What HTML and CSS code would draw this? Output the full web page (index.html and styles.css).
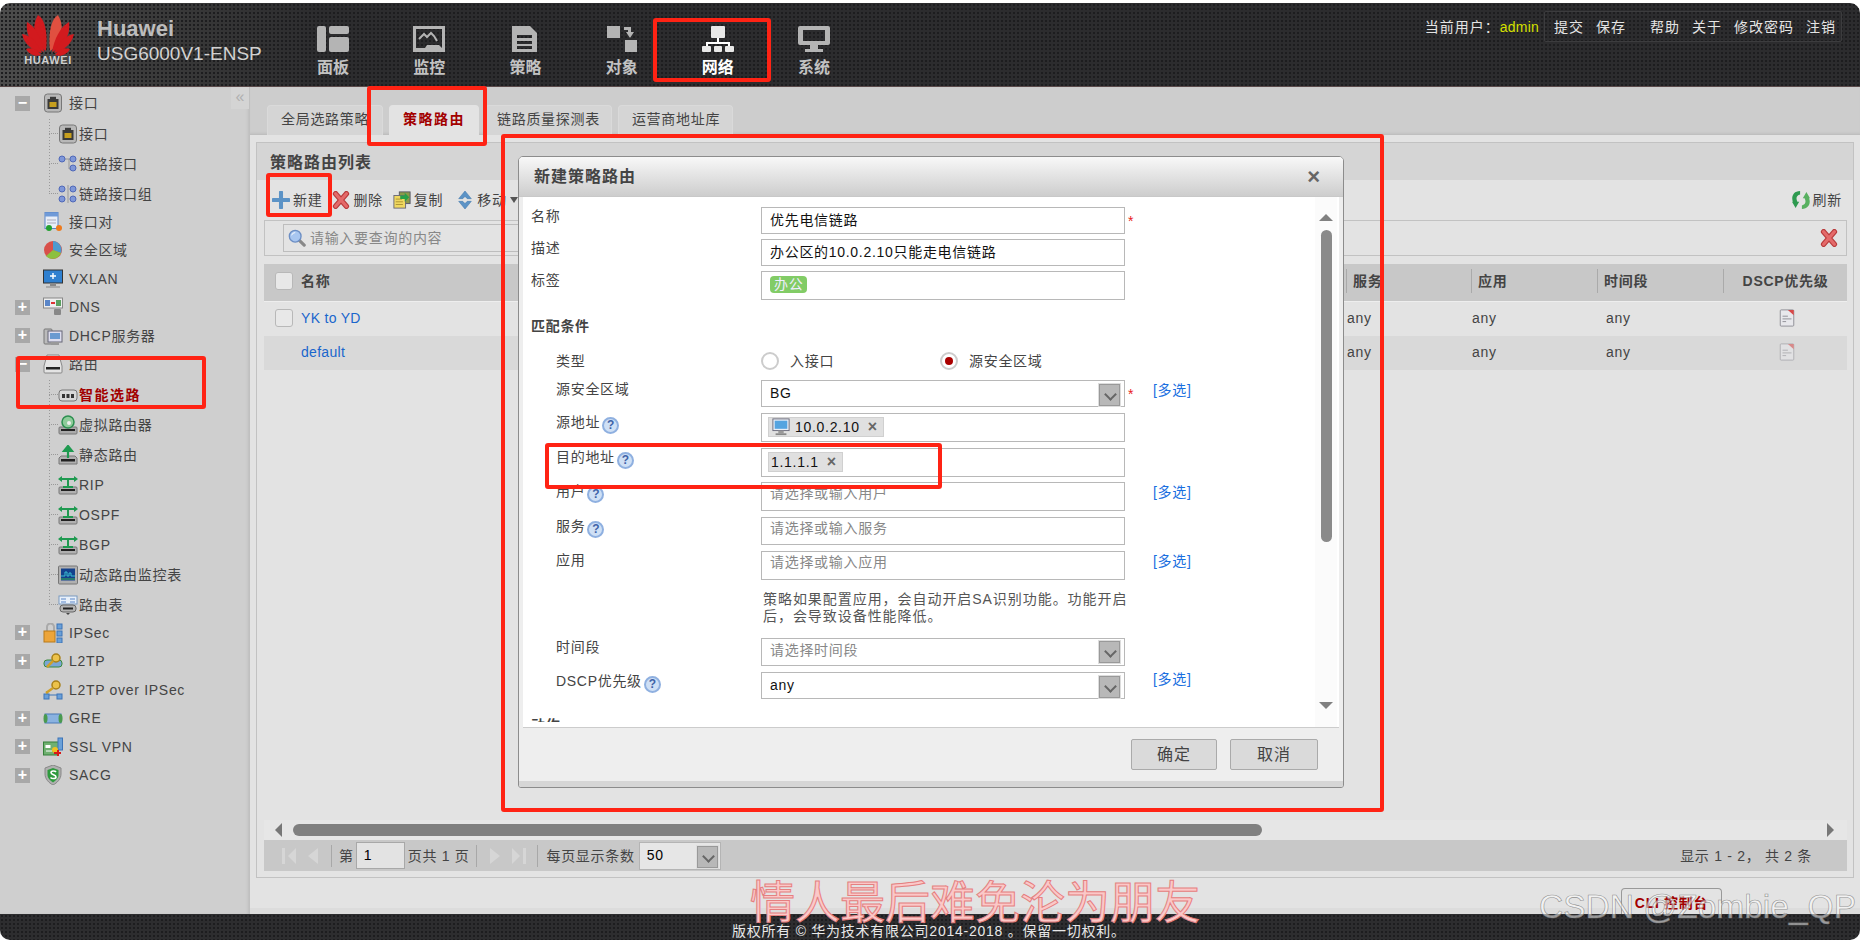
FILE: index.html
```html
<!DOCTYPE html>
<html lang="zh-CN">
<head>
<meta charset="utf-8">
<title>USG6000V1-ENSP</title>
<link rel="stylesheet" href="styles.css">
</head>
<body>
<svg class="defs" aria-hidden="true">
  <symbol id="i-port" viewBox="0 0 20 20"><rect x="1.5" y="1" width="17" height="18" rx="3" fill="#b8b8b8" stroke="#777"/><rect x="4.5" y="6" width="11" height="10" fill="#3a3a3a"/><rect x="7" y="3.8" width="6" height="3" fill="#3a3a3a"/><rect x="6.5" y="9" width="7" height="5" fill="#c79f1e"/></symbol>
  <symbol id="i-link" viewBox="0 0 20 20"><path d="M11 5v10h5M4 5h12" stroke="#999" fill="none"/><circle cx="4" cy="5" r="3" fill="#7f97d8" stroke="#4f68b8"/><circle cx="15" cy="5" r="3" fill="#7f97d8" stroke="#4f68b8"/><circle cx="15" cy="14" r="3" fill="#7f97d8" stroke="#4f68b8"/></symbol>
  <symbol id="i-linkg" viewBox="0 0 20 20"><path d="M10 1v18" stroke="#999"/><circle cx="4" cy="5" r="3" fill="#7f97d8" stroke="#4f68b8"/><circle cx="15" cy="5" r="3" fill="#7f97d8" stroke="#4f68b8"/><circle cx="4" cy="15" r="3" fill="#7f97d8" stroke="#4f68b8"/><circle cx="15" cy="15" r="3" fill="#7f97d8" stroke="#4f68b8"/></symbol>
  <symbol id="i-pair" viewBox="0 0 20 20"><rect x="2" y="0.5" width="13" height="16" fill="#e8eef8" stroke="#5a86c8"/><rect x="2" y="0.5" width="13" height="4" fill="#6f9ad8"/><path d="M4 8h9M4 11h9" stroke="#aab"/><circle cx="6" cy="16" r="3" fill="#22a030"/><circle cx="16" cy="16" r="3" fill="#ee7a1c"/></symbol>
  <symbol id="i-zone" viewBox="0 0 20 20"><circle cx="10" cy="10" r="9" fill="#d8504a"/><path d="M10 10V1a9 9 0 0 1 8 12z" fill="#4c9ad0"/><path d="M10 10l8 3a9 9 0 0 1-15 3z" fill="#8cc040"/></symbol>
  <symbol id="i-vx" viewBox="0 0 20 20"><rect x="0.5" y="1" width="19" height="13" fill="#2f80d0" stroke="#333"/><path d="M10 4v6M7 7h6" stroke="#fff" stroke-width="1.4"/><rect x="7" y="14" width="6" height="3" fill="#888"/><rect x="3" y="17" width="14" height="2" fill="#aaa"/></symbol>
  <symbol id="i-dns" viewBox="0 0 20 20"><rect x="0.5" y="1" width="19" height="10" fill="#eee" stroke="#888"/><rect x="2" y="3" width="5" height="6" fill="#5a86c8"/><rect x="13" y="3" width="5" height="6" fill="#5aa060"/><path d="M8 6h4" stroke="#d33" stroke-width="2"/><rect x="11" y="12" width="7" height="6" rx="1" fill="#888"/></symbol>
  <symbol id="i-dhcp" viewBox="0 0 20 20"><rect x="1" y="3" width="8" height="15" rx="1" fill="#bbb" stroke="#777"/><rect x="5" y="5" width="14" height="11" fill="#dde" stroke="#667"/><rect x="7" y="7" width="10" height="6" fill="#6a9ad0"/><rect x="8" y="16" width="8" height="3" fill="#999"/></symbol>
  <symbol id="i-route" viewBox="0 0 20 20"><path d="M4 1h12l3 11v6a1 1 0 0 1-1 1H2a1 1 0 0 1-1-1v-6z" fill="#e4e4e4" stroke="#888"/><rect x="3" y="13" width="14" height="2.5" fill="#222"/></symbol>
  <symbol id="i-smart" viewBox="0 0 20 20"><rect x="1" y="5" width="18" height="11" rx="3" fill="#d8d8d8" stroke="#777"/><rect x="4" y="9" width="3" height="4" fill="#333"/><rect x="8.500" y="9" width="3" height="4" fill="#333"/><rect x="13" y="9" width="3" height="4" fill="#333"/></symbol>
  <symbol id="i-vr" viewBox="0 0 20 20"><rect x="1" y="12" width="18" height="7" rx="1" fill="#aaa" stroke="#777"/><rect x="3" y="14" width="14" height="2" fill="#222"/><circle cx="10" cy="7" r="6" fill="#8ecc9a" stroke="#2c8f50" stroke-width="1.5"/><circle cx="11" cy="8" r="2" fill="#eee"/></symbol>
  <symbol id="i-static" viewBox="0 0 20 20"><path d="M3 11h14l2 2v6H1v-6z" fill="#b0b0b0" stroke="#777"/><rect x="3" y="14" width="14" height="2.5" fill="#222"/><path d="M10 13V3M6 6l4-5 4 5z" stroke="#1f9a50" stroke-width="2.2" fill="#1f9a50"/></symbol>
  <symbol id="i-tree" viewBox="0 0 20 20"><rect x="1" y="12" width="18" height="7" rx="1" fill="#b0b0b0" stroke="#777"/><rect x="3" y="14" width="14" height="2" fill="#222"/><path d="M10 13V5M2 4h16M5 12h10" stroke="#1f9a50" stroke-width="2" fill="none"/><path d="M0 4l4-3v6zM20 4l-4-3v6z" fill="#1f9a50"/></symbol>
  <symbol id="i-mon" viewBox="0 0 20 20"><rect x="0.5" y="1" width="19" height="18" rx="1" fill="#b0b0b0" stroke="#777"/><rect x="3" y="3.5" width="14" height="12" fill="#14418c"/><path d="M3 11h4V7h2v4h2V8h2v3h4" stroke="#38c0d0" fill="none"/><path d="M3 14h14" stroke="#3ab050"/></symbol>
  <symbol id="i-rt" viewBox="0 0 20 20"><rect x="1" y="1" width="18" height="8" fill="#e8f0fa" stroke="#7a9ac0"/><path d="M3 4h5M12 4h5M3 7h5M12 7h5" stroke="#5a86c8"/><rect x="2" y="10" width="16" height="7" rx="3" fill="#b4b4b4" stroke="#666"/><rect x="5" y="12.5" width="10" height="2" fill="#222"/><path d="M10 20l-2-2h4z" fill="#444"/></symbol>
  <symbol id="i-ipsec" viewBox="0 0 20 20"><path d="M4 8V4a3.500 3.500 0 0 1 7 0v4" fill="none" stroke="#aaa" stroke-width="2"/><rect x="1" y="8" width="11" height="11" fill="#eda53a" stroke="#b87a1a"/><rect x="14" y="1" width="5" height="5" fill="#6aa0d8" stroke="#3c74b8"/><rect x="14" y="8" width="5" height="5" fill="#6aa0d8" stroke="#3c74b8"/><rect x="14" y="15" width="5" height="5" fill="#6aa0d8" stroke="#3c74b8"/></symbol>
  <symbol id="i-l2tp" viewBox="0 0 20 20"><rect x="1" y="9" width="18" height="7" rx="3" fill="#7aa6d6" stroke="#3a8a3a"/><circle cx="13" cy="7" r="4" fill="#ecc24a" stroke="#a8801a" stroke-width="1.500"/><path d="M10 10l-6 6" stroke="#d0a028" stroke-width="2.500"/></symbol>
  <symbol id="i-l2o" viewBox="0 0 20 20"><path d="M4 15h12M4 15v-4" stroke="#3a74b8"/><rect x="1" y="14" width="5" height="5" fill="#6aa0d8" stroke="#3c74b8"/><rect x="14" y="14" width="5" height="5" fill="#6aa0d8" stroke="#3c74b8"/><circle cx="13" cy="5" r="4" fill="#ecc24a" stroke="#a8801a" stroke-width="1.500"/><path d="M10 8l-7 5" stroke="#d0a028" stroke-width="2.500"/></symbol>
  <symbol id="i-gre" viewBox="0 0 20 20"><rect x="2" y="6" width="16" height="9" fill="#8ab2e0" stroke="#4a7ab8"/><ellipse cx="2.500" cy="10.500" rx="2" ry="4.500" fill="#4a9a50"/><ellipse cx="17.500" cy="10.500" rx="2" ry="4.500" fill="#4a9a50"/></symbol>
  <symbol id="i-ssl" viewBox="0 0 20 20"><rect x="0.500" y="5" width="15" height="13" fill="#6fb070" stroke="#35803a"/><rect x="2.500" y="8" width="5" height="3" fill="#fff"/><path d="M3 14h6" stroke="#fff"/><rect x="15" y="1" width="4.500" height="12" fill="#6aa0d8" stroke="#3c74b8"/><circle cx="12" cy="13" r="3" fill="#f0c020"/><path d="M11 16h7M15 13v6" stroke="#d81818" stroke-width="2"/></symbol>
  <symbol id="i-shield" viewBox="0 0 20 20"><path d="M10 0l8 3v6c0 5-4 9-8 11-4-2-8-6-8-11V3z" fill="#b0b0b0" stroke="#888"/><path d="M10 3l5.500 2v5c0 3-3 6-5.500 7.500C7.500 16 4.500 13 4.500 10V5z" fill="#2e9a3e"/><path d="M13 7c-1-1.500-5-1.500-5 .5 0 2.500 5 2 5 4.500 0 2-4 2-5.500 .5" stroke="#fff" stroke-width="1.600" fill="none"/></symbol>
  <symbol id="i-pc" viewBox="0 0 20 20"><rect x="1" y="1" width="18" height="13" fill="#e8eef6" stroke="#667"/><rect x="3" y="3" width="14" height="9" fill="#54a4e0"/><rect x="7" y="14" width="6" height="3" fill="#999"/><rect x="4" y="17" width="12" height="2" fill="#888"/></symbol>
  <symbol id="i-plus" viewBox="0 0 20 20"><path d="M10 1.500v17M1.500 10h17" stroke="#5c93c6" stroke-width="4.500" stroke-linecap="round"/></symbol>
  <symbol id="i-x" viewBox="0 0 20 20"><path d="M4 3l12 14M16 3L4 17" stroke="#b83a3a" stroke-width="6" stroke-linecap="round"/><path d="M4 3l12 14M16 3L4 17" stroke="#e46a6a" stroke-width="3.600" stroke-linecap="round"/></symbol>
  <symbol id="i-copy" viewBox="0 0 20 20"><rect x="7" y="1" width="12" height="13" fill="#8a9a4a" stroke="#556"/><rect x="1" y="5" width="13" height="14" fill="#f0d860" stroke="#667"/><path d="M3 9h7M3 12h8M3 15h8" stroke="#a89030"/><path d="M8 5h5V2l5 5-5 5V9H8z" fill="#28a048"/></symbol>
  <symbol id="i-move" viewBox="0 0 20 20"><path d="M10 0l7 8.500h-4.500L10 6 7.500 8.500H3zM10 20l7-8.500h-4.500L10 14l-2.500-2.500H3z" fill="#5c93c6" stroke="#3f78ad" stroke-width=".6"/></symbol>
  <symbol id="i-refresh" viewBox="0 0 20 20"><path d="M9 0C1 0-1 7 1 12l-1 0 4 7 4-7H6C4 8 5 5 9 4z" fill="#2e9a50"/><path d="M11 20c8 0 10-7 8-12h1l-4-7-4 7h2c2 4 1 7-3 8z" fill="#58b060"/></symbol>
  <symbol id="i-search" viewBox="0 0 20 20"><path d="M12 12l6 6" stroke="#888" stroke-width="3.500" stroke-linecap="round"/><circle cx="8" cy="8" r="6.500" fill="#a8c6f0" stroke="#6c8ec4" stroke-width="1.500"/><path d="M4 7a4 4 0 0 1 4-3" stroke="#fff" fill="none"/></symbol>
  <symbol id="i-doc" viewBox="0 0 20 20"><rect x="2.500" y="1" width="15" height="18" rx="1" fill="#e8e8ec" stroke="#8a8a92"/><path d="M11 1h6.500v6z" fill="#d84848"/><path d="M5 8h6M5 11h10M5 14h4" stroke="#8a8a92"/></symbol>
</svg>

<div class="page">
  <header class="topbar">
    <svg class="logo" viewBox="0 0 50 52" role="img" aria-label="HUAWEI">
      <g fill="#d21a1e">
        <path d="M23 38C11 30 8 13 15 2c7 4 10 18 8 36z"/>
        <path d="M27 38C39 30 42 13 35 2c-7 4-10 18-8 36z" fill="#e05040"/>
        <path d="M21 39C10 34 2 22 4 9c8 4 15 17 17 30z"/>
        <path d="M29 39C40 34 48 22 46 9c-8 4-15 17-17 30z"/>
        <path d="M19 40C10 38 1 31-1 21c9 1 16 10 20 19z"/>
        <path d="M31 40C40 38 49 31 51 21c-9 1-16 10-20 19z"/>
        <path d="M18 42c-5 2-12 0-15-6 6-2 12 1 15 6z"/>
        <path d="M32 42c5 2 12 0 15-6-6-2-12 1-15 6z"/>
      </g>
      <text class="logo-text" x="25" y="51" text-anchor="middle">HUAWEI</text>
    </svg>
    <div class="brand">
      <div class="brand-name">Huawei</div>
      <div class="brand-model">USG6000V1-ENSP</div>
    </div>
    <nav class="nav">
      <div class="nav-item">
        <svg class="nav-icon" viewBox="0 0 32 26"><rect x="0" y="0" width="9" height="26" rx="2"/><rect x="12" y="0" width="20" height="8" rx="2"/><rect x="12" y="11" width="20" height="15" rx="2"/></svg>
        <span>面板</span>
      </div>
      <div class="nav-item">
        <svg class="nav-icon" viewBox="0 0 32 26"><path fill-rule="evenodd" d="M0 0h32v26H0zM3 3v19h9l2-3 12 0 3 3V3z"/><path d="M6 13l5-5 3 3 4-4 3 3 3 5" fill="none" stroke="#b4b4b4" stroke-width="2"/></svg>
        <span>监控</span>
      </div>
      <div class="nav-item">
        <svg class="nav-icon" viewBox="0 0 32 26"><path fill-rule="evenodd" d="M3 0h18l7 7v19H3zM8 9v3h15V9zM8 15v3h15v-3zM8 20v3h15v-3z"/></svg>
        <span>策略</span>
      </div>
      <div class="nav-item">
        <svg class="nav-icon" viewBox="0 0 32 26"><rect x="1" y="0" width="13" height="12"/><rect x="19" y="14" width="12" height="12"/><path d="M18 1h7v5h3l-4 6-4-6h2V4h-4z"/></svg>
        <span>对象</span>
      </div>
      <div class="nav-item is-active">
        <svg class="nav-icon" viewBox="0 0 32 26"><rect x="9" y="0" width="14" height="12" rx="1"/><path d="M16 12v5M5 20v-3h22v3" fill="none" stroke="#fff" stroke-width="2"/><rect x="0" y="20" width="9" height="6" rx="1"/><rect x="12" y="20" width="8" height="6" rx="1"/><rect x="23" y="20" width="9" height="6" rx="1"/></svg>
        <span>网络</span>
      </div>
      <div class="nav-item">
        <svg class="nav-icon" viewBox="0 0 32 26"><path fill-rule="evenodd" d="M2 0h28a2 2 0 0 1 2 2v15a2 2 0 0 1-2 2H2a2 2 0 0 1-2-2V2a2 2 0 0 1 2-2zM5 4v11h22V4z"/><rect x="12" y="19" width="8" height="4"/><rect x="7" y="23" width="18" height="3"/></svg>
        <span>系统</span>
      </div>
    </nav>
    <div class="userbar">
      <span class="user">当前用户：<b class="user-name">admin</b></span>
      <div class="user-menu">
        <a>提交</a><a class="after-gap">保存</a><a>帮助</a><a>关于</a><a>修改密码</a><a>注销</a>
      </div>
    </div>
  </header>

  <div class="main">
    <aside class="sidebar">
      <div class="collapse">«</div>
      <div class="node"><i class="exp">−</i><svg class="ico"><use href="#i-port"/></svg><span>接口</span></div>
      <div class="children">
        <div class="leaf"><i class="dash"></i><svg class="ico"><use href="#i-port"/></svg><span>接口</span></div>
        <div class="leaf"><i class="dash"></i><svg class="ico"><use href="#i-link"/></svg><span>链路接口</span></div>
        <div class="leaf"><i class="dash"></i><svg class="ico"><use href="#i-linkg"/></svg><span>链路接口组</span></div>
      </div>
      <div class="node"><i class="exp none"></i><svg class="ico"><use href="#i-pair"/></svg><span>接口对</span></div>
      <div class="node"><i class="exp none"></i><svg class="ico"><use href="#i-zone"/></svg><span>安全区域</span></div>
      <div class="node"><i class="exp none"></i><svg class="ico"><use href="#i-vx"/></svg><span>VXLAN</span></div>
      <div class="node"><i class="exp">+</i><svg class="ico"><use href="#i-dns"/></svg><span>DNS</span></div>
      <div class="node"><i class="exp">+</i><svg class="ico"><use href="#i-dhcp"/></svg><span>DHCP服务器</span></div>
      <div class="node"><i class="exp">−</i><svg class="ico"><use href="#i-route"/></svg><span>路由</span></div>
      <div class="children">
        <div class="leaf is-current"><i class="dash"></i><svg class="ico"><use href="#i-smart"/></svg><span>智能选路</span></div>
        <div class="leaf"><i class="dash"></i><svg class="ico"><use href="#i-vr"/></svg><span>虚拟路由器</span></div>
        <div class="leaf"><i class="dash"></i><svg class="ico"><use href="#i-static"/></svg><span>静态路由</span></div>
        <div class="leaf"><i class="dash"></i><svg class="ico"><use href="#i-tree"/></svg><span>RIP</span></div>
        <div class="leaf"><i class="dash"></i><svg class="ico"><use href="#i-tree"/></svg><span>OSPF</span></div>
        <div class="leaf"><i class="dash"></i><svg class="ico"><use href="#i-tree"/></svg><span>BGP</span></div>
        <div class="leaf"><i class="dash"></i><svg class="ico"><use href="#i-mon"/></svg><span>动态路由监控表</span></div>
        <div class="leaf"><i class="dash"></i><svg class="ico"><use href="#i-rt"/></svg><span>路由表</span></div>
      </div>
      <div class="node"><i class="exp">+</i><svg class="ico"><use href="#i-ipsec"/></svg><span>IPSec</span></div>
      <div class="node"><i class="exp">+</i><svg class="ico"><use href="#i-l2tp"/></svg><span>L2TP</span></div>
      <div class="node"><i class="exp none"></i><svg class="ico"><use href="#i-l2o"/></svg><span>L2TP over IPSec</span></div>
      <div class="node"><i class="exp">+</i><svg class="ico"><use href="#i-gre"/></svg><span>GRE</span></div>
      <div class="node"><i class="exp">+</i><svg class="ico"><use href="#i-ssl"/></svg><span>SSL VPN</span></div>
      <div class="node"><i class="exp">+</i><svg class="ico"><use href="#i-shield"/></svg><span>SACG</span></div>
    </aside>

    <section class="content">
      <div class="tabs">
        <div class="tab first">全局选路策略</div>
        <div class="tab is-active">策略路由</div>
        <div class="tab">链路质量探测表</div>
        <div class="tab last">运营商地址库</div>
      </div>
      <div class="panel-wrap">
        <div class="panel">
          <div class="panel-title">策略路由列表</div>
          <div class="toolbar">
            <div class="tool"><svg class="tool-ico"><use href="#i-plus"/></svg>新建</div>
            <div class="tool"><svg class="tool-ico"><use href="#i-x"/></svg>删除</div>
            <div class="tool"><svg class="tool-ico"><use href="#i-copy"/></svg>复制</div>
            <div class="tool tool-move"><svg class="tool-ico"><use href="#i-move"/></svg>移动<i class="caret"></i></div>
            <div class="tool tool-right"><svg class="tool-ico"><use href="#i-refresh"/></svg>刷新</div>
          </div>
          <div class="search">
            <div class="search-input"><svg class="tool-ico"><use href="#i-search"/></svg><span>请输入要查询的内容</span></div>
            <svg class="tool-ico search-clear"><use href="#i-x"/></svg>
          </div>
          <div class="table">
            <div class="tr th">
              <div class="td name"><i class="check"></i><span>名称</span></div>
              <div class="td"><span class="th-cell">服务</span></div>
              <div class="td"><span class="th-cell">应用</span></div>
              <div class="td"><span class="th-cell">时间段</span></div>
              <div class="td"><span class="th-cell center">DSCP优先级</span></div>
            </div>
            <div class="tr row-a">
              <div class="td name"><i class="check"></i><a class="lnk">YK to YD</a></div>
              <div class="td val">any</div><div class="td val">any</div><div class="td val third">any</div>
              <div class="td doc"><svg class="tool-ico"><use href="#i-doc"/></svg></div>
            </div>
            <div class="tr row-b">
              <div class="td name"><i class="check hidden"></i><a class="lnk">default</a></div>
              <div class="td val">any</div><div class="td val">any</div><div class="td val third">any</div>
              <div class="td doc faded"><svg class="tool-ico"><use href="#i-doc"/></svg></div>
            </div>
          </div>
          <div class="hscroll"><i class="arr-l"></i><div class="hthumb"></div><i class="arr-r"></i></div>
          <div class="pager">
            <div class="pg-nav">
              <svg class="pg-ico first" viewBox="0 0 14 18"><rect x="0" y="1" width="3" height="16"/><path d="M14 1v16L6 9z"/></svg>
              <svg class="pg-ico prev" viewBox="0 0 10 18"><path d="M10 1v16L0 9z"/></svg>
            </div>
            <i class="sep"></i>
            <span>第</span>
            <div class="pg-input">1</div>
            <span class="pg-total">页共 1 页</span>
            <i class="sep b"></i>
            <div class="pg-nav">
              <svg class="pg-ico prev" viewBox="0 0 10 18"><path d="M0 1v16L10 9z"/></svg>
              <svg class="pg-ico first" viewBox="0 0 14 18"><path d="M0 1v16L8 9z"/><rect x="11" y="1" width="3" height="16"/></svg>
            </div>
            <i class="sep c"></i>
            <span>每页显示条数</span>
            <div class="pg-select"><span>50</span><i class="sel-btn"></i></div>
            <span class="pg-info">显示 1 - 2， 共 2 条</span>
          </div>
        </div>
      </div>
      <div class="cli-row"><div class="cli">CLI 控制台</div></div>
    </section>
  </div>

  <footer class="footer">版权所有 © 华为技术有限公司2014-2018 。保留一切权利。</footer>

  <div class="dialog">
    <div class="dlg-title"><span>新建策略路由</span><span class="dlg-close">×</span></div>
    <div class="dlg-body">
      <div class="form">
        <div class="row h27"><label class="lb top">名称</label><div class="field">优先电信链路</div><span class="star">*</span></div>
        <div class="row h27 m5"><label class="lb top">描述</label><div class="field">办公区的10.0.2.10只能走电信链路</div></div>
        <div class="row h29 m5"><label class="lb top">标签</label><div class="field chip-field"><span class="chip">办公</span></div></div>
        <div class="form-head">匹配条件</div>
        <div class="row radio-row"><label class="lb">类型</label>
          <div class="radios">
            <div class="radio-item"><i class="radio"></i>入接口</div>
            <div class="radio-item"><i class="radio on"></i>源安全区域</div>
          </div>
        </div>
        <div class="row h27 m10"><label class="lb">源安全区域</label><div class="field select">BG<i class="sel-btn"></i></div><span class="star">*</span><a class="multi">[多选]</a></div>
        <div class="row h29"><label class="lb">源地址<i class="help">?</i></label><div class="field tags"><span class="tag"><svg class="tag-ico"><use href="#i-pc"/></svg>10.0.2.10<b class="tag-x">×</b></span></div></div>
        <div class="row h29"><label class="lb">目的地址<i class="help">?</i></label><div class="field tags"><span class="tag">1.1.1.1<b class="tag-x">×</b></span></div></div>
        <div class="row h29 m5"><label class="lb">用户<i class="help">?</i></label><div class="field ph">请选择或输入用户</div><span class="star"></span><a class="multi">[多选]</a></div>
        <div class="row h28"><label class="lb">服务<i class="help">?</i></label><div class="field ph">请选择或输入服务</div></div>
        <div class="row h29"><label class="lb">应用</label><div class="field ph">请选择或输入应用</div><span class="star"></span><a class="multi">[多选]</a></div>
        <div class="note">策略如果配置应用，会自动开启SA识别功能。功能开启<br>后，会导致设备性能降低。</div>
        <div class="row h28 m12"><label class="lb">时间段</label><div class="field select ph">请选择时间段<i class="sel-btn"></i></div></div>
        <div class="row h27"><label class="lb">DSCP优先级<i class="help">?</i></label><div class="field select">any<i class="sel-btn"></i></div><span class="star"></span><a class="multi up">[多选]</a></div>
        <div class="form-head cut">动作</div>
      </div>
      <div class="vscroll"><i class="arr-u"></i><div class="vthumb"></div><i class="arr-d"></i></div>
    </div>
    <div class="dlg-foot"><div class="btn">确定</div><div class="btn wide">取消</div></div>
    <div class="dlg-edge"></div>
  </div>

  <div class="mark m-nav"></div>
  <div class="mark m-tab"></div>
  <div class="mark m-new"></div>
  <div class="mark m-route"></div>
  <div class="mark m-dialog"></div>
  <div class="mark m-dest"></div>
  <div class="wm-pink">情人最后难免沦为朋友</div>
  <div class="wm-csdn">CSDN @Zombie_QP</div>
</div>
</body>
</html>
```

FILE: styles.css
```css
* { box-sizing: border-box; }
html, body { margin: 0; padding: 0; }
body {
  width: 1860px; height: 940px; overflow: hidden; background: #fff; color: #444;
  font: 14px/18px "Liberation Sans", "Noto Sans CJK SC", sans-serif; letter-spacing: .7px;
}
.defs { display: none; }
i { font-style: normal; }
.page { position: relative; width: 1860px; height: 940px; display: flex; flex-direction: column; padding-top: 3px; }

/* header */
.topbar {
  height: 84px; display: flex; align-items: flex-start; padding: 10px 0 0 23px; border-radius: 10px 10px 0 0;
  border-bottom: 1px solid #5a4a4a;
  background:
    radial-gradient(circle, #1d1d1f 1px, transparent 1.4px) 0 0/4px 4px,
    linear-gradient(90deg, #4c4c4c 0, #3a3a3a 160px, #2c2c2e 320px);
}
.logo { width: 50px; height: 52px; flex: none; overflow: visible; }
.logo-text { font: bold 11px "Liberation Sans", sans-serif; fill: #cfcfcf; letter-spacing: .6px; }
.brand { width: 188px; margin-left: 24px; flex: none; color: #d2d2d2; letter-spacing: 0; padding-top: 4px; }
.brand-name { font-size: 22px; line-height: 24px; font-weight: bold; color: #bdbdbd; }
.brand-model { font-size: 19px; line-height: 24px; margin-top: 1px; }
.nav { display: flex; margin-top: 3px; }
.nav-item { width: 96.200px; display: flex; flex-direction: column; align-items: center; padding-top: 10px; color: #c2c2c2; font-weight: bold; font-size: 16px; letter-spacing: 0; }
.nav-item span { margin-top: 7px; }
.nav-icon { width: 32px; height: 26px; fill: #b4b4b4; }
.nav-item.is-active { color: #fff; }
.nav-item.is-active .nav-icon { fill: #e8e8e8; }
.userbar { margin-left: auto; margin-right: 18px; display: flex; align-items: center; color: #e4e4e4; margin-top: -2px; }
.user { margin-right: 5px; white-space: nowrap; letter-spacing: 1px; }
.user-name { color: #d6e000; font-weight: normal; letter-spacing: .2px; }
.user-menu { display: flex; gap: 12px; height: 31px; align-items: center; padding: 0 5px 0 9px; border: 1px solid #3c3c3e; border-radius: 2px; letter-spacing: 1px; }
.user-menu .after-gap { margin-right: 12px; }

/* layout */
.main { flex: 1; display: flex; min-height: 0; }

/* sidebar */
.sidebar { position: relative; width: 250px; flex: none; background: #cfcfcf; box-shadow: inset -3px 0 3px -1px #bdbdbd; padding-top: 2px; }
.collapse { position: absolute; right: 1px; top: 0; width: 18px; height: 22px; color: #b0b0b0; font-size: 16px; line-height: 20px; text-align: center; background: #d4d4d4; letter-spacing: 0; }
.node { height: 28.500px; display: flex; align-items: center; padding-left: 15px; }
.exp { width: 15px; height: 15px; background: #a8a8a8; color: #fff; font-size: 16px; line-height: 14px; font-weight: bold; text-align: center; flex: none; margin-right: 13px; letter-spacing: 0; }
.exp.none { background: none; }
.ico { width: 20px; height: 20px; flex: none; }
.node .ico { margin-right: 6px; }
.node span, .leaf span { white-space: nowrap; }
.children { margin: 1px 0 -1px 49px; }
.leaf {
  height: 30px; display: flex; align-items: center;
  background: repeating-linear-gradient(#999 0 1px, transparent 1px 3px) 0 0/1px 100% no-repeat;
}
.leaf:last-child { background-size: 1px 50%; }
.leaf .ico { margin-right: 1px; }
.dash { width: 9px; height: 1px; border-top: 1px dotted #999; flex: none; }
.leaf.is-current span { color: #a20000; font-weight: bold; letter-spacing: 1.500px; }

/* content */
.content { flex: 1; display: flex; flex-direction: column; min-width: 0; background: #e3e3e3; }
.tabs { height: 48px; flex: none; display: flex; align-items: flex-end; gap: 6px; padding-left: 17px; background: #cdcdcd; box-shadow: inset 0 -3px 3px -2px #b8b8b8; }
.tab { height: 30px; padding: 0 11px; line-height: 27px; background: #d5d5d5; border: 1px solid #dadada; border-bottom: 0; border-radius: 4px 4px 0 0; white-space: nowrap; }
.tab.first { padding-left: 13px; width: 116px; overflow: hidden; }
.tab.last { padding: 0 12px 0 13px; }
.tab.is-active { background: #e3e3e3; color: #a20000; font-weight: bold; letter-spacing: 1.500px; border-color: #e3e3e3; padding: 0 13px; }
.panel-wrap { padding: 7px 6px 0; flex: none; }
.panel { height: 736px; border: 1px solid #c2c2c2; display: flex; flex-direction: column; }
.panel-title { height: 37px; flex: none; background: #d5d5d5; padding: 11px 0 0 13px; font-size: 16px; font-weight: bold; letter-spacing: 1px; color: #444; }
.toolbar { height: 40px; flex: none; display: flex; align-items: center; padding: 0 11px 0 15px; gap: 10px; }
.tool { display: flex; align-items: center; gap: 3px; white-space: nowrap; }
.tool-move { margin-left: 3px; }
.tool-right { margin-left: auto; }
.tool-ico { width: 18px; height: 18px; flex: none; }
.caret { width: 0; height: 0; border: 4px solid transparent; border-top: 6px solid #555; border-bottom: 0; }
.search { height: 36px; flex: none; margin: 0 6px 8px 7px; border: 1px solid #c2c2c2; display: flex; align-items: center; padding-left: 18px; padding-right: 8px; justify-content: space-between; }
.search-input { width: 500px; height: 28px; border: 1px solid #bdbdbd; display: flex; align-items: center; gap: 4px; padding-left: 4px; color: #888; }
.table { flex: 1; margin: 0 6px 0 7px; }
.tr { display: grid; grid-template-columns: 1082px 125px 126px 126px 124px; align-items: center; }
.th { height: 37px; background: #c8c8c8; font-weight: bold; padding-bottom: 3px; }
.row-a { height: 35px; background: #e3e3e3; border-top: 1px solid #eee; padding-bottom: 2px; }
.row-b { height: 34px; background: #d9d9d9; padding-bottom: 2px; }
.td { display: flex; align-items: center; }
.td.name { padding-left: 11px; gap: 8px; }
.check { width: 18px; height: 18px; border: 1px solid #b8b8b8; border-radius: 3px; background: #e8e8e8; flex: none; }
.check.hidden { visibility: hidden; }
.lnk { color: #1a66cc; letter-spacing: .3px; }
.th-cell { flex: 1; height: 24px; line-height: 24px; border-left: 1px solid #aaa; padding-left: 6px; white-space: nowrap; }
.th-cell.center { text-align: center; padding-left: 0; }
.val { padding-left: 1px; }
.val.third { padding-left: 9px; }
.doc { justify-content: center; padding-left: 4px; }
.faded { opacity: .55; }
.hscroll { height: 20px; flex: none; margin: 0 6px 0 7px; background: #e6e6e6; display: flex; align-items: center; padding: 0 13px 0 11px; }
.arr-l { width: 0; height: 0; border: 7px solid transparent; border-left: 0; border-right: 7px solid #777; }
.arr-r { width: 0; height: 0; border: 7px solid transparent; border-right: 0; border-left: 7px solid #777; margin-left: auto; }
.hthumb { width: 969px; height: 12px; background: #808080; border-radius: 6px; margin-left: 11px; }
.pager { height: 31px; flex: none; margin: 0 6px 6px 7px; background: #c8c8c8; display: flex; align-items: center; padding: 0 35px 0 18px; white-space: nowrap; }
.pg-nav { display: flex; gap: 12px; align-items: center; }
.pg-ico { height: 18px; fill: #d6d6d6; }
.pg-ico.first { width: 14px; }
.pg-ico.prev { width: 10px; }
.sep { width: 1px; height: 22px; background: #a8a8a8; margin: 0 7px 0 13px; flex: none; }
.sep.b { margin: 0 13px 0 7px; }
.sep.c { margin: 0 8px 0 11px; }
.pg-input { width: 49px; height: 27px; margin-left: 2px; background: #e3e3e3; border: 1px solid #a8a8a8; padding: 3px 0 0 7px; color: #000; }
.pg-total { margin-left: 3px; }
.pg-select { width: 82px; height: 28px; margin-left: 4px; background: #e6e6e6; border: 1px solid #b4b4b4; padding: 3px 0 0 7px; color: #000; display: flex; justify-content: space-between; }
.sel-btn { width: 21px; height: 22px; background: #b8b8b8; border: 1px solid #999; box-shadow: 0 0 0 1px #ddd; position: relative; display: block; flex: none; margin: 0 2px 0 0; }
.sel-btn::after { content: ""; position: absolute; left: 6px; top: 5px; width: 7px; height: 7px; border-right: 2px solid #666; border-bottom: 2px solid #666; transform: rotate(45deg); }
.pg-info { margin-left: auto; letter-spacing: .7px; }
.cli-row { flex: 1; display: flex; justify-content: flex-end; align-items: flex-end; padding-right: 138px; background: linear-gradient(#e3e3e3 30px, #dcdcdc 0); }
.cli { width: 101px; height: 26px; border: 1px solid #999; border-bottom: 0; border-radius: 4px 4px 0 0; color: #a20000; font-weight: bold; text-align: center; line-height: 28px; background: #e3e3e3; white-space: nowrap; }

/* footer */
.footer {
  height: 26px; flex: none; border-radius: 0 0 10px 10px; color: #e8e8e8; padding: 8px 0 0 732px; letter-spacing: .75px;
  background: radial-gradient(circle, #1d1d1f 1px, transparent 1.4px) 0 0/4px 4px, #2d2d2f;
}

/* dialog */
.dialog { position: absolute; left: 518px; top: 156px; width: 826px; height: 632px; border: 1px solid #8c8c8c; border-radius: 5px 5px 3px 3px; background: #eee; display: flex; flex-direction: column; overflow: hidden; }
.dlg-title { height: 40px; flex: none; background: linear-gradient(#f8f8f8, #cdcdcd); border-bottom: 1px solid #c8c8c8; display: flex; justify-content: space-between; align-items: center; padding: 0 22px 0 15px; font-size: 16px; font-weight: bold; letter-spacing: 1px; color: #444; }
.dlg-close { font-size: 22px; color: #666; font-weight: bold; }
.dlg-body { height: 531px; flex: none; margin: 0 4px; background: #fff; border-bottom: 1px solid #ccc; display: flex; }
.form { flex: 1; height: 525px; overflow: hidden; padding: 10px 0 0 8px; }
.row { display: flex; margin-top: 6px; }
.row:first-child { margin-top: 0; }
.m5 { margin-top: 5px; }
.m10 { margin-top: 10px; }
.m12 { margin-top: 12px; }
.h27 { height: 27px; }
.h28 { height: 28px; }
.h29 { height: 29px; }
.lb { width: 230px; flex: none; padding-left: 25px; display: block; white-space: nowrap; }
.lb.top { padding-left: 0; }
.help { display: inline-block; width: 17px; height: 17px; border-radius: 50%; background: #cfe0f5; border: 2px solid #8fb0e0; color: #3f63a8; font-size: 12px; font-weight: bold; line-height: 13px; text-align: center; letter-spacing: 0; margin-left: 2px; vertical-align: -2px; }
.field { width: 364px; flex: none; border: 1px solid #b8b8b8; padding: 3px 8px 0; color: #111; background: #fff; white-space: nowrap; }
.field.ph { color: #888; padding-top: 1px; }
.chip-field { padding-top: 3px; }
.chip { display: inline-block; padding: 0 4px; height: 17px; line-height: 17px; border-radius: 4px; background: #82cc66; color: #eef; }
.star { width: 28px; flex: none; color: #e82020; padding: 5px 0 0 3px; }
.multi { color: #1a6fe0; padding-top: 1px; }
.multi.up { padding-top: 0; margin-top: -2px; }
.form-head { margin-top: 16px; height: 20px; line-height: 20px; font-weight: bold; }
.form-head.cut { margin-top: 16px; }
.radio-row { height: 18px; margin-top: 16px; }
.radios { display: flex; }
.radio-item { display: flex; align-items: center; gap: 11px; width: 179px; }
.radio { width: 18px; height: 18px; border-radius: 50%; border: 2px solid #ccc; background: #fff; flex: none; position: relative; }
.radio.on::after { content: ""; position: absolute; left: 3px; top: 3px; width: 8px; height: 8px; border-radius: 50%; background: #a00; }
.select { display: flex; justify-content: space-between; align-items: flex-start; padding-right: 2px; }
.select.field.ph { padding-top: 2px; }
.tags { padding: 3px 8px 0 6px; }
.tag { display: inline-flex; align-items: center; height: 20px; padding: 0 6px 0 2px; background: #e0e0e0; border: 1px solid #d0d0d0; }
.tag-ico { width: 20px; height: 18px; margin-right: 4px; }
.tag-x { color: #666; margin-left: 8px; font-size: 16px; letter-spacing: 0; }
.note { margin: 11px 0 0 232px; line-height: 17px; color: #555; white-space: nowrap; letter-spacing: .95px; }
.note + .row { margin-top: 13px; }
.vscroll { width: 22px; flex: none; margin-right: 2px; background: #fbfbfb; display: flex; flex-direction: column; align-items: center; padding-top: 17px; }
.arr-u { width: 0; height: 0; border: 7px solid transparent; border-top: 0; border-bottom: 7px solid #808080; }
.arr-d { width: 0; height: 0; border: 7px solid transparent; border-bottom: 0; border-top: 7px solid #808080; margin-top: 160px; }
.vthumb { width: 11px; height: 312px; background: #8a8a8a; border-radius: 6px; margin-top: 9px; }
.dlg-foot { flex: 1; display: flex; justify-content: flex-end; align-items: flex-start; gap: 13px; padding: 11px 25px 0 0; }
.btn { width: 86px; height: 31px; background: #dadada; border: 1px solid #aaa; border-radius: 2px; color: #444; font-size: 16px; line-height: 30px; text-align: center; letter-spacing: 1px; }
.btn.wide { width: 88px; }
.dlg-edge { height: 6px; flex: none; background: #d6d6d6; }

/* annotations */
.mark { position: absolute; border: 4px solid #ff2314; border-radius: 3px; }
.m-nav { left: 653px; top: 18px; width: 118px; height: 64px; }
.m-tab { left: 367px; top: 86px; width: 120px; height: 60px; }
.m-new { left: 266px; top: 173px; width: 66px; height: 44px; }
.m-route { left: 16px; top: 356px; width: 190px; height: 53px; }
.m-dialog { left: 501px; top: 134px; width: 883px; height: 678px; }
.m-dest { left: 545px; top: 443px; width: 397px; height: 46px; }
.wm-pink { position: absolute; left: 750px; top: 870px; font: 45px/60px "Noto Sans CJK SC", sans-serif; letter-spacing: 0; color: #fbc8c8; -webkit-text-stroke: 1px #e58080; white-space: nowrap; }
.wm-csdn { position: absolute; left: 1539px; top: 885px; font: 33.500px/44px "Liberation Sans", sans-serif; letter-spacing: 0; color: rgba(255,255,255,.55); -webkit-text-stroke: .6px rgba(120,120,120,.8); white-space: nowrap; }
```
